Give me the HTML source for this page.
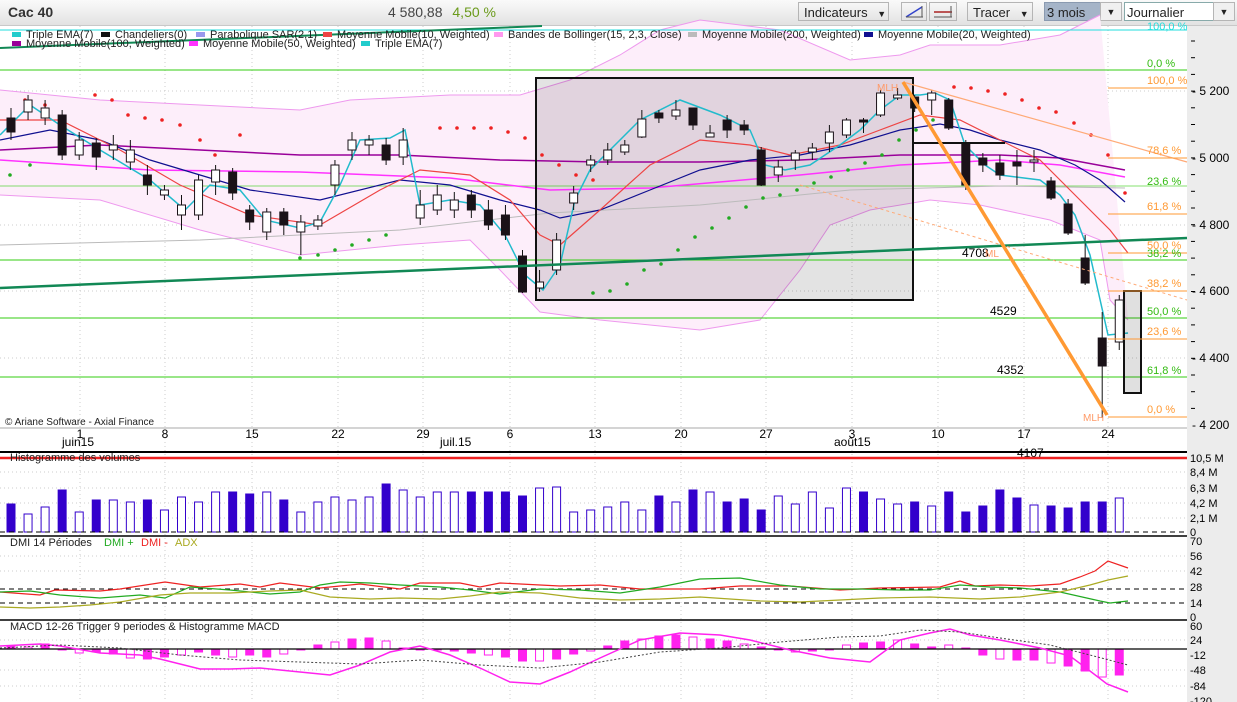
<!DOCTYPE html>
<html><head><meta charset="utf-8">
<style>
body{margin:0;width:1237px;height:702px;overflow:hidden;background:#fff;font-family:"Liberation Sans",sans-serif;}
#hdr{position:absolute;left:0;top:0;width:1237px;height:25px;background:linear-gradient(#fafafa,#e2e2e2);border-bottom:1px solid #c8c8c8;}
.b{position:absolute;top:2px;height:19px;border:1px solid #b5b5b5;background:linear-gradient(#f7f7f7,#e4e4e4);font-size:13px;color:#222;line-height:19px;box-sizing:border-box;}
svg{position:absolute;left:0;top:0}
</style></head><body>
<div id="hdr">
<div style="position:absolute;left:8px;top:4px;font-weight:bold;font-size:14px;color:#333">Cac 40</div>
<div style="position:absolute;left:388px;top:4px;font-size:14px;color:#444">4 580,88 <span style="color:#6a9a1a;margin-left:6px">4,50 %</span></div>
<div class="b" style="left:798px;width:91px;padding-left:5px">Indicateurs <span style="font-size:9px;margin-left:6px">▼</span></div>
<div class="b" style="left:901px;width:26px"><svg width="24" height="17" style="position:relative"><line x1="4" y1="14" x2="20" y2="4" stroke="#3344cc" stroke-width="1.5"/><line x1="20" y1="3" x2="20" y2="14" stroke="#555"/><line x1="4" y1="14" x2="21" y2="14" stroke="#555"/></svg></div>
<div class="b" style="left:929px;width:28px"><svg width="26" height="17" style="position:relative"><line x1="4" y1="9" x2="22" y2="9" stroke="#aa2222" stroke-width="1.5"/><line x1="21" y1="3" x2="21" y2="14" stroke="#555"/><line x1="4" y1="14" x2="22" y2="14" stroke="#555"/></svg></div>
<div class="b" style="left:967px;width:66px;padding-left:5px">Tracer <span style="font-size:9px;margin-left:6px">▼</span></div>
<div class="b" style="left:1044px;width:78px;background:#a5b4c8;border-color:#8a9ab0;padding-left:2px">3 mois</div>
<div class="b" style="left:1100px;width:22px;background:#f0f0f0;text-align:center;font-size:9px">▼</div>
<div class="b" style="left:1124px;width:111px;background:#fff;border-color:#8aa;padding-left:2px">Journalier</div>
<div class="b" style="left:1213px;width:22px;background:#f0f0f0;text-align:center;font-size:9px">▼</div>
</div>
<svg id="s" width="1237" height="702" style="top:0" font-family="Liberation Sans, sans-serif">
<rect x="1187" y="26" width="50" height="676" fill="#ececec"/>
<g id="g"></g>
</svg>
<script>
var g=document.getElementById('g'),h='';
function L(p,c,w,e){h+='<polyline fill="none" points="'+p.map(a=>a.join(',')).join(' ')+'" stroke="'+c+'" stroke-width="'+(w||1)+'" '+(e||'')+'/>';}
function R(x,y,w,hh,f,s,sw){h+='<rect x="'+x+'" y="'+y+'" width="'+w+'" height="'+hh+'" fill="'+f+'" stroke="'+(s||'none')+'" stroke-width="'+(sw||1)+'"/>';}
function T(x,y,t,c,sz,a){h+='<text x="'+x+'" y="'+y+'" fill="'+(c||'#000')+'" font-size="'+(sz||11)+'" '+(a||'')+'>'+t+'</text>';}
// grid dotted
[80,165,252,338,423,510,595,681,766,852,938,1024,1108].forEach(x=>{h+='<line x1="'+x+'" y1="26" x2="'+x+'" y2="702" stroke="#ccc" stroke-dasharray="1,3"/>';});
[91,158,225,291,358].forEach(y=>{h+='<line x1="0" y1="'+y+'" x2="1187" y2="'+y+'" stroke="#ccc" stroke-dasharray="1,3"/>';});
// bollinger
var up=[[0,90],[100,100],[200,105],[300,110],[350,100],[450,95],[520,95],[570,80],[620,55],[660,30],[700,20],[780,30],[850,60],[900,55],[930,45],[1000,45],[1060,35],[1100,15]];
var lo=[[1128,320],[1110,300],[1100,240],[1050,220],[980,205],[930,200],[870,210],[830,225],[800,270],[760,320],[700,330],[600,320],[540,312],[500,270],[470,240],[400,245],[300,255],[200,230],[100,200],[0,195]];
h+='<polygon points="'+up.concat(lo).map(a=>a.join(',')).join(' ')+'" fill="#fdeefa"/>';
L(up,'#ee99ee');L(lo,'#ee99ee');
// rectangle
R(536,78,377,222,'rgba(0,0,0,0.11)');
// horizontal lines
[70,260,318,377].forEach(y=>{h+='<line x1="0" y1="'+y+'" x2="1187" y2="'+y+'" stroke="#33cc11"/>';});
h+='<line x1="0" y1="186" x2="1187" y2="186" stroke="#33cc11" opacity=".6"/>';
h+='<line x1="0" y1="30" x2="1187" y2="30" stroke="#22dddd"/>';
// MAs
L([[0,245],[200,240],[400,230],[550,213],[700,205],[850,190],[1000,186],[1125,188]],'#bbb');
L([[0,150],[100,145],[200,150],[300,155],[400,155],[500,160],[600,162],[700,162],[800,160],[900,155],[1000,155],[1060,158],[1125,170]],'#990099',1.5);
L([[0,160],[150,170],[300,172],[450,178],[550,190],[650,188],[800,175],[900,165],[1000,160],[1060,165],[1125,177]],'#ff33ff',1.5);
L([[0,140],[50,130],[100,140],[150,160],[200,175],[250,190],[320,200],[400,180],[450,185],[500,200],[540,210],[560,218],[600,210],[650,190],[700,170],[750,160],[800,155],[850,145],[900,130],[940,124],[970,130],[1000,140],[1040,150],[1075,165],[1100,180],[1125,202]],'#101090',1.2);
L([[0,120],[60,120],[120,150],[180,185],[250,215],[320,225],[380,190],[420,170],[470,175],[510,200],[540,235],[560,245],[600,210],[650,165],[700,140],[750,145],[790,155],[840,145],[880,130],[920,115],[960,120],[1000,140],[1040,160],[1080,200],[1110,230],[1128,253]],'#ee4444',1.2);
L([[0,135],[30,105],[60,125],[100,150],[150,180],[185,210],[210,185],[240,190],[265,220],[300,228],[320,222],[340,185],[360,140],[390,138],[405,130],[420,205],[450,200],[480,205],[505,235],[525,275],[543,290],[560,265],[575,200],[590,170],[620,140],[640,120],[680,100],[720,115],[750,130],[765,165],[785,170],[810,165],[840,145],[860,130],[880,110],[900,95],[920,95],[935,93],[950,100],[965,145],[985,165],[1000,175],[1040,180],[1060,195],[1075,215],[1090,255],[1108,335],[1128,333]],'#22bbcc',1.5);
// SAR dots
var sr=[[25,100],[45,105],[95,95],[112,100],[128,115],[145,118],[162,120],[180,125],[200,140],[215,155],[240,135],[440,128],[457,128],[474,128],[491,128],[508,132],[525,138],[542,155],[559,165],[576,175],[593,180],[954,87],[971,88],[988,91],[1005,94],[1022,100],[1039,108],[1056,112],[1074,123],[1091,135],[1108,155],[1125,193]];
sr.forEach(p=>{h+='<circle cx="'+p[0]+'" cy="'+p[1]+'" r="1.8" fill="#ee2222"/>';});
var sg=[[10,175],[30,165],[300,258],[318,255],[335,250],[352,245],[369,240],[386,235],[593,293],[610,291],[627,284],[644,270],[661,264],[678,250],[695,237],[712,228],[729,218],[746,207],[763,198],[780,195],[797,190],[814,183],[831,177],[848,170],[865,163],[882,155],[899,140],[916,130],[933,120]];
sg.forEach(p=>{h+='<circle cx="'+p[0]+'" cy="'+p[1]+'" r="1.8" fill="#22aa22"/>';});
// candles
var c=[[118,132,108,140,0],[100,112,95,120,1],[108,118,100,125,1],[115,155,110,160,0],[140,155,132,160,1],[143,157,138,170,0],[145,150,135,160,1],[150,162,140,170,1],[175,185,165,195,0],[190,195,185,200,1],[205,215,195,230,1],[180,215,175,220,1],[170,182,165,195,1],[172,193,168,200,0],[210,222,205,230,0],[212,232,208,240,1],[212,225,208,235,0],[222,232,215,255,1],[220,226,215,230,1],[165,185,160,195,1],[140,150,132,160,1],[140,145,135,155,1],[145,160,138,165,0],[140,157,128,165,1],[205,218,190,225,1],[195,210,185,215,1],[200,210,192,218,1],[195,210,190,218,0],[210,225,200,230,0],[215,235,205,240,0],[256,292,250,293,0],[282,288,270,292,1],[240,270,233,275,1],[193,203,186,210,1],[160,165,155,172,1],[150,160,143,165,1],[145,152,140,155,1],[119,137,110,138,1],[113,118,110,123,0],[110,116,100,120,1],[108,125,108,130,0],[133,137,125,137,1],[120,130,115,138,0],[125,130,120,135,0],[150,185,147,186,0],[167,175,160,182,1],[153,160,150,170,1],[148,152,143,160,1],[132,143,125,152,1],[120,135,118,138,1],[120,122,118,133,0],[93,115,90,117,1],[95,98,88,100,1],[97,108,95,112,0],[93,100,90,115,1],[100,128,98,130,0],[143,185,140,190,0],[158,165,153,172,0],[163,175,155,180,0],[162,166,150,185,0],[160,162,150,172,1],[181,198,177,200,0],[204,233,199,235,0],[258,283,235,285,0],[338,366,312,418,0],[300,342,295,350,1]];
c.forEach((d,i)=>{var x=11+i*17.05;var t=Math.min(d[0],d[1]),b=Math.max(d[0],d[1]);
h+='<line x1="'+x+'" y1="'+d[2]+'" x2="'+x+'" y2="'+d[3]+'" stroke="#111"/>';
R(x-4,t,8,Math.max(b-t,1.5),d[4]?'#fff':'#1a1218','#1a1218');});
// rectangles border
R(536,78,377,222,'none','#111',2);
R(1124,291,17,102,'rgba(0,0,0,0.12)','#111',2);
h+='<line x1="914" y1="143" x2="1005" y2="143" stroke="#111" stroke-width="2"/>';
// green trendline
h+='<line x1="0" y1="288" x2="1187" y2="238" stroke="#118855" stroke-width="2.5"/>';
h+='<line x1="0" y1="48" x2="542" y2="26" stroke="#118855" stroke-width="2"/>';
// orange
h+='<line x1="903" y1="82" x2="1187" y2="162" stroke="#ffaa77" stroke-width="1.2"/>';
h+='<line x1="800" y1="185" x2="1187" y2="300" stroke="#ffaa77" stroke-dasharray="3,3"/>';
h+='<line x1="903" y1="82" x2="1107" y2="415" stroke="#ff9933" stroke-width="3.5"/>';
[[88,'100,0 %'],[158,'78,6 %'],[214,'61,8 %'],[253,'50,0 %'],[291,'38,2 %'],[339,'23,6 %'],[417,'0,0 %']].forEach(f=>{h+='<line x1="1108" y1="'+f[0]+'" x2="1187" y2="'+f[0]+'" stroke="#ff9933"/>';T(1147,f[0]-4,f[1],'#ff9933',11);});
[[67,'0,0 %'],[185,'23,6 %'],[257,'38,2 %'],[315,'50,0 %'],[374,'61,8 %']].forEach(f=>{T(1147,f[0],f[1],'#33bb11',11);});
T(1147,30,'100,0 %','#22dddd',11);
T(877,91,'MLH','#ff9966',10);T(1083,421,'MLH','#ff9966',10);
T(962,257,'4708','#000',12);T(985,257,'ML','#ff9966',10);
T(990,315,'4529','#000',12);T(997,374,'4352','#000',12);
T(1017,457,'4107','#000',12);
// legend
var lg=[[12,'#22cccc','Triple EMA(7)'],[101,'#111','Chandeliers(0)'],[196,'#9999ee','Parabolique SAR(2,1)'],[323,'#ee4444','Moyenne Mobile(10, Weighted)'],[494,'#ff99ee','Bandes de Bollinger(15, 2,3, Close)'],[688,'#bbb','Moyenne Mobile(200, Weighted)'],[864,'#101090','Moyenne Mobile(20, Weighted)']];
lg.forEach(l=>{R(l[0],32,9,5,l[1]);T(l[0]+14,38,l[2],'#222',11);});
[[12,'#990099','Moyenne Mobile(100, Weighted)'],[189,'#ff33ff','Moyenne Mobile(50, Weighted)'],[361,'#22cccc','Triple EMA(7)']].forEach(l=>{R(l[0],41,9,5,l[1]);T(l[0]+14,47,l[2],'#222',11);});
T(5,425,'© Ariane Software - Axial Finance','#222',10);
// axis
h+='<line x1="0" y1="428" x2="1187" y2="428" stroke="#aaa"/>';
[[91,'5 200'],[158,'5 000'],[225,'4 800'],[291,'4 600'],[358,'4 400'],[425,'4 200']].forEach(a=>{T(1192,a[0]+4,'- '+a[1],'#000',12);});
for(var y=41;y<425;y+=16.7){h+='<line x1="1191" y1="'+y+'" x2="1195" y2="'+y+'" stroke="#000"/>';}
[[80,'1'],[165,'8'],[252,'15'],[338,'22'],[423,'29'],[510,'6'],[595,'13'],[681,'20'],[766,'27'],[852,'3'],[938,'10'],[1024,'17'],[1108,'24']].forEach(a=>{T(a[0],438,a[1],'#000',12,'text-anchor="middle"');});
T(62,446,'juin15','#000',12);T(440,446,'juil.15','#000',12);T(834,446,'août15','#000',12);
// volume panel
h+='<line x1="0" y1="452" x2="1187" y2="452" stroke="#000" stroke-width="2"/>';
h+='<line x1="0" y1="458" x2="1187" y2="458" stroke="#ee2222" stroke-width="2.5"/>';
T(10,461,'Histogramme des volumes','#222',11);
[472,488,503,518].forEach(y=>{h+='<line x1="0" y1="'+y+'" x2="1187" y2="'+y+'" stroke="#ccc" stroke-dasharray="1,3"/>';});
var v=[28,18,25,42,20,32,32,30,32,22,35,30,40,40,38,40,32,20,30,35,32,35,48,42,35,40,40,40,40,40,36,44,45,20,22,25,30,22,36,30,42,40,30,33,22,36,28,40,24,44,40,33,28,30,26,40,20,26,42,34,27,26,24,30,30,34,52,75];
c.forEach((d,i)=>{var x=11+i*17.05,hh=v[i]||30;R(x-4,532-hh,8,hh,d[4]?'#fff':'#3300cc','#3300cc');});
h+='<line x1="0" y1="532" x2="1187" y2="532" stroke="#000" stroke-dasharray="5,4"/>';
[[458,'10,5 M'],[472,'8,4 M'],[488,'6,3 M'],[503,'4,2 M'],[518,'2,1 M'],[532,'0']].forEach(a=>{T(1190,a[0]+4,a[1],'#000',11);});
// DMI
h+='<line x1="0" y1="536" x2="1187" y2="536" stroke="#000" stroke-width="1.5"/>';
T(10,546,'DMI 14 Périodes','#222',11);T(104,546,'DMI +','#22aa22',11);T(141,546,'DMI -','#ee2222',11);T(175,546,'ADX','#aaaa22',11);
[556,571].forEach(y=>{h+='<line x1="0" y1="'+y+'" x2="1187" y2="'+y+'" stroke="#ccc" stroke-dasharray="1,3"/>';});
h+='<line x1="0" y1="589" x2="1187" y2="589" stroke="#000" stroke-dasharray="5,4"/>';
h+='<line x1="0" y1="603" x2="1187" y2="603" stroke="#000" stroke-dasharray="5,4"/>';
L([[0,592],[40,595],[55,590],[100,591],[120,589],[165,582],[200,587],[240,584],[260,587],[280,583],[320,588],[360,584],[400,589],[420,583],[460,583],[480,587],[500,583],[560,586],[600,585],[640,589],[700,589],[740,586],[790,586],[840,590],[880,588],[940,587],[960,581],[975,586],[1000,585],[1030,586],[1060,584],[1080,577],[1095,571],[1108,561],[1128,568]],'#ee2222',1.2);
L([[0,592],[30,591],[60,595],[100,598],[140,595],[165,598],[190,587],[230,590],[270,594],[300,592],[320,585],[340,582],[370,583],[400,585],[440,587],[470,590],[500,594],[540,589],[580,590],[620,593],[660,587],[700,579],[740,578],[780,585],[820,589],[860,589],[900,590],[930,590],[960,585],[990,587],[1020,588],[1060,592],[1100,601],[1110,603],[1128,601]],'#22aa22',1.2);
L([[0,607],[30,608],[60,607],[90,605],[120,602],[160,595],[190,593],[230,593],[270,591],[300,590],[330,597],[370,599],[400,598],[440,599],[470,596],[500,592],[540,593],[580,598],[620,600],[660,599],[700,597],[760,601],[800,602],[840,600],[880,598],[930,597],[980,599],[1020,597],[1060,592],[1090,585],[1108,580],[1128,576]],'#aaaa22',1.2);
[[541,'70'],[556,'56'],[571,'42'],[587,'28'],[603,'14'],[617,'0']].forEach(a=>{T(1190,a[0]+4,a[1],'#000',11);});
// MACD
h+='<line x1="0" y1="620" x2="1187" y2="620" stroke="#000" stroke-width="1.5"/>';
T(10,630,'MACD 12-26   Trigger 9 periodes &amp; Histogramme MACD','#222',11);
[640,670,686].forEach(y=>{h+='<line x1="0" y1="'+y+'" x2="1187" y2="'+y+'" stroke="#ccc" stroke-dasharray="1,3"/>';});
var m=[3,2,5,-1,-4,-3,-5,-9,-10,-8,-6,-3,-6,-8,-6,-8,-5,0,4,7,10,11,8,1,-1,-1,-2,-4,-6,-8,-12,-12,-10,-5,-2,3,8,10,13,14,12,10,8,5,2,0,-3,-2,0,4,6,7,9,5,2,4,1,-6,-10,-11,-11,-14,-17,-22,-28,-26];
c.forEach((d,i)=>{var x=11+i*17.05,q=m[i]||0;var filled=(i%3!=1);R(x-4,q>0?649-q:649,8,Math.abs(q)||1,filled?'#ff22ee':'#fff','#ff22ee');});
h+='<line x1="0" y1="649" x2="1187" y2="649" stroke="#000" stroke-width="1.2"/>';
L([[0,646],[40,644],[60,646],[100,653],[140,655],[160,659],[200,669],[230,669],[260,668],[300,672],[330,675],[360,665],[390,652],[420,646],[450,655],[480,668],[510,682],[540,684],[570,672],[600,658],[640,640],[680,633],[720,635],[750,640],[790,650],[830,658],[870,662],[900,640],[930,633],[950,629],[970,635],[1000,640],[1040,648],[1070,656],[1090,671],[1107,684],[1128,692]],'#ff22ee',1.5);
L([[0,648],[60,645],[120,648],[180,655],[240,660],[300,662],[360,664],[420,660],[480,665],[540,668],[600,662],[660,652],[720,648],[780,642],[840,637],[880,636],[920,630],[960,632],[1000,638],[1050,645],[1090,655],[1128,665]],'#444',1,'stroke-dasharray="2,2"');
[[626,'60'],[640,'24'],[655,'-12'],[670,'-48'],[686,'-84'],[701,'-120']].forEach(a=>{T(1190,a[0]+4,a[1],'#000',11);});
g.innerHTML=h;
</script>
</body></html>
